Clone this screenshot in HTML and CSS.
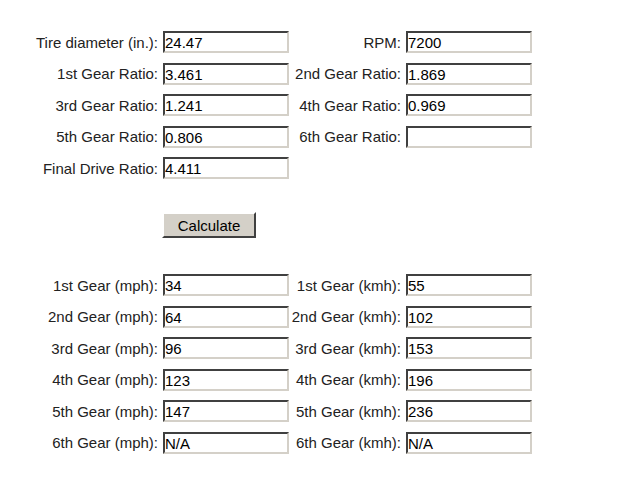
FILE: index.html
```html
<!DOCTYPE html>
<html lang="en">
<head>
  <meta charset="UTF-8" />
  <title>Gear Speed Calculator</title>
  <link rel="stylesheet" href="styles.css">
</head>
<body>
  <form class="calc">
    <div class="grid">
      <label>Tire diameter (in.):</label><input type="text" value="24.47">
      <label>RPM:</label><input type="text" value="7200">
      <label>1st Gear Ratio:</label><input type="text" value="3.461">
      <label>2nd Gear Ratio:</label><input type="text" value="1.869">
      <label>3rd Gear Ratio:</label><input type="text" value="1.241">
      <label>4th Gear Ratio:</label><input type="text" value="0.969">
      <label>5th Gear Ratio:</label><input type="text" value="0.806">
      <label>6th Gear Ratio:</label><input type="text" value="">
      <label>Final Drive Ratio:</label><input type="text" value="4.411">
    </div>

    <div class="actions">
      <button type="button">Calculate</button>
    </div>

    <div class="grid results">
      <label>1st Gear (mph):</label><input type="text" value="34">
      <label>1st Gear (kmh):</label><input type="text" value="55">
      <label>2nd Gear (mph):</label><input type="text" value="64">
      <label>2nd Gear (kmh):</label><input type="text" value="102">
      <label>3rd Gear (mph):</label><input type="text" value="96">
      <label>3rd Gear (kmh):</label><input type="text" value="153">
      <label>4th Gear (mph):</label><input type="text" value="123">
      <label>4th Gear (kmh):</label><input type="text" value="196">
      <label>5th Gear (mph):</label><input type="text" value="147">
      <label>5th Gear (kmh):</label><input type="text" value="236">
      <label>6th Gear (mph):</label><input type="text" value="N/A">
      <label>6th Gear (kmh):</label><input type="text" value="N/A">
    </div>
  </form>
</body>
</html>
```

FILE: styles.css
```css
body {
  margin: 8px;
  background: #fff;
  color: #000;
  font-family: 'Liberation Sans', Arial, sans-serif;
  font-size: 15px;
}
.calc {
  padding-top: 23px;
}
.grid {
  display: grid;
  grid-template-columns: 150px 126px 107px 126px;
  grid-auto-rows: 22px;
  column-gap: 5px;
  row-gap: 9.5px;
  align-items: center;
}
.grid label {
  justify-self: end;
  text-align: right;
  white-space: nowrap;
  color: #222;
}
.grid input {
  box-sizing: border-box;
  width: 126px;
  height: 22px;
  margin: 0;
  padding: 1px 1px 0 0;
  font-family: 'Liberation Sans', Arial, sans-serif;
  font-size: 15px;
  color: #000;
  background: #fff;
  border-top: 2px solid #404040;
  border-left: 2px solid #404040;
  border-right: 2px solid #d4d0c8;
  border-bottom: 2px solid #d4d0c8;
  outline: none;
}
.actions {
  padding: 33px 0 36px 154px;
}
button {
  box-sizing: border-box;
  width: 94px;
  height: 26px;
  margin: 0;
  padding: 0;
  font-family: 'Liberation Sans', Arial, sans-serif;
  font-size: 15px;
  color: #000;
  background: #d4d0c8;
  border-top: 2px solid #fff;
  border-left: 2px solid #fff;
  border-right: 2px solid #404040;
  border-bottom: 2px solid #404040;
}
```
